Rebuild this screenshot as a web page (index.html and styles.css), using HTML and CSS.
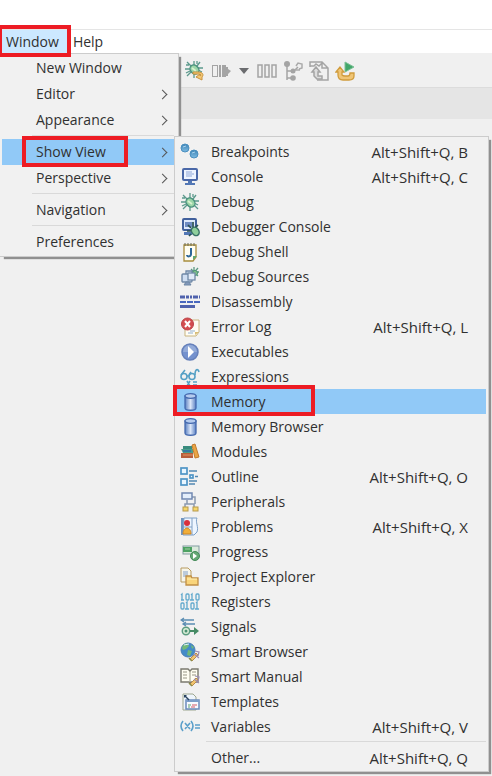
FILE: index.html
```html
<!DOCTYPE html>
<html lang="en">
<head>
<meta charset="utf-8">
<title>Window menu</title>
<link rel="stylesheet" href="styles.css">
</head>
<body>
<svg class="defs" aria-hidden="true">
  <defs>
    <linearGradient id="ball" x1="0" y1="0" x2="0" y2="1"><stop offset="0" stop-color="#3d83b5"/><stop offset="1" stop-color="#7fbce3"/></linearGradient>
    <linearGradient id="cyl" x1="0" x2="1"><stop offset="0" stop-color="#5a80c2"/><stop offset=".5" stop-color="#dbe6f8"/><stop offset="1" stop-color="#5a80c2"/></linearGradient>
    <g id="bug">
      <path d="M7 7 3 3M6 10H1M7 13 3 17M10 6V1M13 7 16 3M14 9H19M14 13 18 17M10 14V19M5 6H2M13 5V2M6 12 2 14M14 11 18 13" fill="none" stroke="#5b998c" stroke-width="1.300"/>
      <ellipse cx="10.500" cy="10.500" rx="4" ry="5" transform="rotate(-40 10.500 10.500)" fill="#9bd6a8" stroke="#4b917e" stroke-width="1.400"/>
      <path d="M8 9l4 3" stroke="#d8f2d0" stroke-width="1.600"/>
    </g>
    <g id="cylinder">
      <path d="M5 4v12c0 3 11 3 11 0V4z" fill="url(#cyl)" stroke="#4469ae" stroke-width="1.300"/>
      <ellipse cx="10.500" cy="4" rx="5.500" ry="2.300" fill="#b5cbee" stroke="#4469ae" stroke-width="1.300"/>
    </g>
    <g id="wand">
      <path d="M10 17l6-6 2 2-6 6z" fill="#f1c56e" stroke="#b98a4e"/>
      <path d="M15 9l4 1-1 4M14 12l5 4" fill="none" stroke="#9b8db2" stroke-width="1.200"/>
      <path d="M9 16l3 3" stroke="#8a8c4a" stroke-width="1.500"/>
    </g>
  </defs>
</svg>

<header class="titlebar"></header>

<nav class="menubar" role="menubar" aria-label="Main">
  <div class="menubar-entry">
    <button class="menubar-button active marked" type="button" aria-expanded="true">Window</button>
    <div class="menu main-menu" role="menu" aria-label="Window">
      <button class="item" role="menuitem" type="button">New Window</button>
      <button class="item more" role="menuitem" type="button">Editor</button>
      <button class="item more" role="menuitem" type="button">Appearance</button>
      <hr>
      <div class="parent">
        <button class="item more selected marked" role="menuitem" type="button" aria-expanded="true">Show View</button>
        <div class="menu submenu" role="menu" aria-label="Show View">
          <button class="item" role="menuitem" type="button"><svg viewBox="0 0 20 20"><circle cx="5" cy="6" r="4" fill="url(#ball)" stroke="#4a8fbf"/><circle cx="14" cy="12" r="4" fill="url(#ball)" stroke="#4a8fbf"/><path d="M3 5l3-1M12 11l3-1" stroke="#a9d3ee"/></svg><span>Breakpoints</span><kbd>Alt+Shift+Q, B</kbd></button>
          <button class="item" role="menuitem" type="button"><svg viewBox="0 0 20 20"><rect x="3" y="2" width="14" height="11" rx="1" fill="#eef4ff" stroke="#4a68a8" stroke-width="2"/><path d="M6 5h6M6 7h8M6 9h6" stroke="#8ea7d8"/><path d="M8 14h4v2h3v2H5v-2h3z" fill="#5277b5"/></svg><span>Console</span><kbd>Alt+Shift+Q, C</kbd></button>
          <button class="item" role="menuitem" type="button"><svg viewBox="0 0 20 20"><use href="#bug"/></svg><span>Debug</span></button>
          <button class="item" role="menuitem" type="button"><svg viewBox="0 0 20 20"><rect x="3" y="2" width="13" height="11" rx="1" fill="#dce8fb" stroke="#41609c" stroke-width="2"/><path d="M5 5h7v5H5z" fill="#6d8bc2"/><path d="M4 15h8v3H4z" fill="#5277b5"/><path d="M8 8l3 3M13 5v5M18 8l-3 3M7 14h4M11 17l-2 2" stroke="#2a4f50" stroke-width="1.700"/><ellipse cx="15" cy="14.500" rx="3.500" ry="4.500" transform="rotate(-35 15 14)" fill="#8fcf9c" stroke="#3a7267" stroke-width="1.500"/></svg><span>Debugger Console</span></button>
          <button class="item" role="menuitem" type="button"><svg viewBox="0 0 20 20"><path d="M4 3h12v12l-3 4H4z" fill="#fffef2" stroke="#a88d3d" stroke-width="1.300"/><path d="M5 1v3M8 1v3M11 1v3M14 1v3" stroke="#6d6a50"/><path d="M11 6v6c0 3-4 3-4 1" fill="none" stroke="#2d6699" stroke-width="2"/><path d="M13 18v-4h4z" fill="#5ea873"/></svg><span>Debug Shell</span></button>
          <button class="item" role="menuitem" type="button"><svg viewBox="0 0 20 20"><path d="M11 2l7 7M18 1l-7 8M14 0v9M11 5h8" stroke="#5b9983" stroke-width="1.300"/><circle cx="15" cy="6" r="2.500" fill="#86c888" stroke="#4c9075"/><path d="M6 8V4h6v8" fill="#dce8f5" stroke="#6f88a6" stroke-width="1.300"/><rect x="2" y="7" width="10" height="8" rx="1" fill="#cfdef2" stroke="#6f88a6" stroke-width="1.400"/><rect x="8" y="6" width="7" height="7" fill="#e1eaf7" stroke="#6f88a6" stroke-width="1.300"/><path d="M4 18h7l-2-3H6z" fill="#8298ba" stroke="#6f88a6"/></svg><span>Debug Sources</span></button>
          <button class="item" role="menuitem" type="button"><svg viewBox="0 0 20 20"><path d="M0 5h20" stroke="#4f62ad" stroke-width="3" stroke-dasharray="5 1 3 1 2 1"/><path d="M0 10h20" stroke="#4968bf" stroke-width="2" stroke-dasharray="6 1"/><path d="M0 14.500h15" stroke="#4f62ad" stroke-width="3"/></svg><span>Disassembly</span></button>
          <button class="item" role="menuitem" type="button"><svg viewBox="0 0 20 20"><path d="M8 3h11v12l-3 4H5V9z" fill="#fffdf4" stroke="#c9b47f"/><path d="M10 14h5M8 16h5" stroke="#92afd2"/><path d="M15 18v-3h4z" fill="#d9bd75"/><circle cx="7.500" cy="7" r="6" fill="#d34e50" stroke="#bd4247"/><path d="M5 4l5 6M10 4l-5 6" stroke="#fff" stroke-width="2"/></svg><span>Error Log</span><kbd>Alt+Shift+Q, L</kbd></button>
          <button class="item" role="menuitem" type="button"><svg viewBox="0 0 20 20"><circle cx="10" cy="10" r="8" fill="#7592ce" stroke="#6680ba" stroke-width="1.500"/><path d="M3 10a7 7 0 0 1 14 0z" fill="#93abd9"/><path d="M8 4l6 6-6 6z" fill="#fff"/></svg><span>Executables</span></button>
          <button class="item" role="menuitem" type="button"><svg viewBox="0 0 20 20"><g fill="none" stroke="#55a0c5" stroke-width="1.600"><circle cx="4" cy="9.500" r="3"/><circle cx="12" cy="9.500" r="3"/><path d="M1 8l4-5M9 8l2-3M7 9h2M15 8c0-6 3-7 4-3M7 14l3 5M10 14l-3 5M13 15h4M13 18h4"/></g></svg><span>Expressions</span></button>
          <button class="item selected marked" role="menuitem" type="button"><svg viewBox="0 0 20 20"><use href="#cylinder"/></svg><span>Memory</span></button>
          <button class="item" role="menuitem" type="button"><svg viewBox="0 0 20 20"><use href="#cylinder"/></svg><span>Memory Browser</span></button>
          <button class="item" role="menuitem" type="button"><svg viewBox="0 0 20 20"><path d="M3 4h9v3H3z" fill="#398b7d"/><path d="M1 7h12v4H3z" fill="#4a9d8a"/><path d="M3 8h8v2H3z" fill="#3679a3"/><path d="M1 11h12v5H1z" fill="#b75e3d"/><path d="M3 13h10" stroke="#e19563"/><path d="M12 3l3-1 4 13-4 1z" fill="#e9a545" stroke="#c37b2d"/></svg><span>Modules</span></button>
          <button class="item" role="menuitem" type="button"><svg viewBox="0 0 20 20"><g fill="#e9f6ff" stroke="#4f95c6" stroke-width="1.700"><rect x="1" y="1" width="6" height="6"/><rect x="1" y="12" width="6" height="6"/><rect x="10" y="8" width="3" height="3"/></g><path d="M9 4h8M15 9.500h3M9 14h8M9 17h6" stroke="#5288b2" stroke-width="1.500"/></svg><span>Outline</span><kbd>Alt+Shift+Q, O</kbd></button>
          <button class="item" role="menuitem" type="button"><svg viewBox="0 0 20 20"><path d="M7 8v4M5 15v-3h9v3M12 5h3v7" fill="none" stroke="#8a99b0" stroke-width="1.500"/><rect x="2" y="1" width="10" height="6" fill="#e4eefb" stroke="#7088b2" stroke-width="1.500"/><rect x="3" y="15" width="5" height="4" fill="#f5d66b" stroke="#b79a4c"/><rect x="13" y="15" width="5" height="4" fill="#f5d66b" stroke="#b79a4c"/></svg><span>Peripherals</span></button>
          <button class="item" role="menuitem" type="button"><svg viewBox="0 0 20 20"><path d="M1 1h4v17H1z" fill="#7094be"/><path d="M4 1h13c-2 4 2 9 0 14l-3 3H3z" fill="#edf5ff" stroke="#7ca0c7"/><path d="M12 1v17M3 10h9" stroke="#81a1c4"/><circle cx="7" cy="6" r="3" fill="#d9303c"/><path d="M3 17c0-8 8-8 8 0z" fill="#f1ae38" stroke="#cb8527"/></svg><span>Problems</span><kbd>Alt+Shift+Q, X</kbd></button>
          <button class="item" role="menuitem" type="button"><svg viewBox="0 0 20 20"><rect x="3" y="4" width="16" height="8" fill="#dbeadc" stroke="#829ba1"/><path d="M3 5h9v5H3z" fill="#4da263"/><path d="M5 7h5" stroke="#a4d0a5"/><circle cx="15" cy="14" r="4.500" fill="#65a875" stroke="#438a57"/><path d="M13 11l4 3-4 3z" fill="#fff"/></svg><span>Progress</span></button>
          <button class="item" role="menuitem" type="button"><svg viewBox="0 0 20 20"><path d="M1 1h7l3 3v11H1z" fill="#f6f5eb" stroke="#b79b60"/><path d="M3 5h5M3 7h5M3 9h5" stroke="#819fc9"/><path d="M6 9h5l1 2h6v7H6z" fill="#f9d47a" stroke="#c08e45" stroke-width="1.300"/><path d="M7 12h10" stroke="#fff1b9"/></svg><span>Project Explorer</span></button>
          <button class="item" role="menuitem" type="button"><svg viewBox="0 0 20 20"><g fill="none" stroke="#61a9cd" stroke-width="1.300"><path d="M1 3l1-1v6M1 8h3M11 3l1-1v6M10 8h4M6 11l1-1v7M5 17h4M16 11l1-1v7M15 17h4"/><rect x="6" y="2" width="3" height="6" rx="1"/><rect x="16" y="2" width="3" height="6" rx="1"/><rect x="1" y="11" width="3" height="6" rx="1"/><rect x="11" y="11" width="3" height="6" rx="1"/></g></svg><span>Registers</span></button>
          <button class="item" role="menuitem" type="button"><svg viewBox="0 0 20 20"><path d="M2 3h12M3 7h12M4 1L1 3l3 2M6 5L3 7l3 2" fill="none" stroke="#5a8db3" stroke-width="1.300"/><circle cx="6" cy="14" r="3.700" fill="#dcefd9" stroke="#5b9c80" stroke-width="1.500"/><circle cx="6" cy="14" r="1.500" fill="#4b9173"/><path d="M10 13h4v-3l5 4-5 4v-3h-4z" fill="#468b65"/></svg><span>Signals</span></button>
          <button class="item" role="menuitem" type="button"><svg viewBox="0 0 20 20"><circle cx="8" cy="8" r="7" fill="#438bc8" stroke="#4a80b4"/><path d="M3 3l4-2 2 3-3 3-3 1-1-2zM8 8l4 1-2 5-3-1zM11 3l3 2-2 2z" fill="#72b978"/><path d="M4 3l5-1" stroke="#dcefff"/><use href="#wand"/></svg><span>Smart Browser</span></button>
          <button class="item" role="menuitem" type="button"><svg viewBox="0 0 20 20"><path d="M1 2h7l2 2 2-2h6v13h-7l-1 1-1-1H1z" fill="#fffef2" stroke="#7b7a6f" stroke-width="1.400"/><path d="M10 4v11M3 5h4M3 8h4M3 11h4M12 5h4M12 8h4" stroke="#999786"/><use href="#wand"/></svg><span>Smart Manual</span></button>
          <button class="item" role="menuitem" type="button"><svg viewBox="0 0 20 20"><path d="M3 2h10l3 3v13H3z" fill="#eef5fc" stroke="#9ea790"/><rect x="6" y="8" width="13" height="9" fill="#f8faff" stroke="#6b8bba" stroke-width="1.500"/><path d="M6 9h13" stroke="#7c9ec9" stroke-width="2"/><path d="M8 13h3M8 15h2" stroke="#5ba371"/><path d="M12 13h5M11 15h4" stroke="#d45a66"/><path d="M5 4l4 4" stroke="#28425e" stroke-width="1.500"/><path d="M4 3h3L4 6z" fill="#28425e"/></svg><span>Templates</span></button>
          <button class="item" role="menuitem" type="button"><svg viewBox="0 0 20 20"><path d="M3 4q-4 5 0 10M11 4q4 5 0 10M5 6l5 6M10 6l-5 6M15 8h5M15 11h5" fill="none" stroke="#5b9fca" stroke-width="1.600"/></svg><span>Variables</span><kbd>Alt+Shift+Q, V</kbd></button>
          <hr>
          <button class="item" role="menuitem" type="button"><span>Other...</span><kbd>Alt+Shift+Q, Q</kbd></button>
        </div>
      </div>
      <button class="item more" role="menuitem" type="button">Perspective</button>
      <hr>
      <button class="item more" role="menuitem" type="button">Navigation</button>
      <hr>
      <button class="item" role="menuitem" type="button">Preferences</button>
    </div>
  </div>
  <button class="menubar-button" type="button">Help</button>
</nav>

<main class="workbench">
  <div class="toolbar" role="toolbar" aria-label="Debug">
    <button type="button" aria-label="Debug"><svg viewBox="0 0 20 20"><g transform="translate(-1 -2)"><use href="#bug"/></g><path d="M8 11h5c5 0 6 3 4 5v3l-6-3 4-3v2c2-1 0-2-2-2H8z" fill="#f5c873" stroke="#c8923f"/></svg></button>
    <button type="button" aria-label="Resume"><svg viewBox="0 0 20 20" fill="#a4a4a4"><path d="M1 4h6v12H1zM2 5v10h4V5z" fill-rule="evenodd"/><path d="M8 4h2v12H8zM11 4h4v2h2v2l3 2-3 3v2h-2v1h-4z"/></svg></button>
    <button class="drop" type="button" aria-label="Resume options"><svg viewBox="0 0 10 6"><path d="M0 0h10L5 6z" fill="#6b6c6f"/></svg></button>
    <button type="button" aria-label="Columns"><svg viewBox="0 0 20 20" fill="none" stroke="#a4a4a4" stroke-width="1.500"><path d="M1 4h4v12H1zM8 4h4v12H8zM15 4h4v12h-4z"/></svg></button>
    <button type="button" aria-label="Tree"><svg viewBox="0 0 20 20"><circle cx="4" cy="3" r="3" fill="#a4a4a4"/><path d="M4 4v15M4 10h5M4 17h5M12 9l3-3" fill="none" stroke="#a4a4a4" stroke-width="1.500"/><circle cx="10" cy="10" r="2.500" fill="#a4a4a4"/><circle cx="10" cy="17" r="2.800" fill="#a4a4a4"/><path d="M13 5l2-3 4 1v4l-3 1M12 9h5" fill="none" stroke="#aaa" stroke-width="1.500"/></svg></button>
    <button type="button" aria-label="Restart file"><svg viewBox="0 0 20 20" fill="none" stroke="#a4a4a4" stroke-width="1.500"><path d="M1 6V1h12l6 6v12H8M1 5h4l2-2 3 2 3-3M13 2v5h6"/><path d="M3 11l4-5 4 5H9v4h4v3H8l-3-3v-4z" fill="#ddd"/></svg></button>
    <button type="button" aria-label="Run again"><svg viewBox="0 0 20 20"><path d="M10 1l9 5-9 5z" fill="#42a76a" stroke="#7cc095"/><path d="M1 11l4-5 4 5H7v3q1 1 3 1h3q2 0 2-3h4v3q0 4-5 4H8q-5 0-5-5v-3z" fill="#f0c575" stroke="#d09c3c" stroke-width="1.300"/></svg></button>
  </div>
  <div class="tabstrip"></div>
</main>
</body>
</html>
```

FILE: styles.css
```css
* { box-sizing: border-box; }

body {
  margin: 0;
  min-height: 100vh;
  display: flex;
  flex-direction: column;
  background: #fff;
  color: #303030;
  font: 14px/20px "Open Sans", "Noto Sans", sans-serif;
}

button {
  margin: 0;
  padding: 0;
  border: 0;
  background: none;
  color: inherit;
  font: inherit;
  text-align: left;
}

svg { display: block; width: 20px; height: 20px; }

.defs { position: absolute; width: 0; height: 0; }

.titlebar { height: 30px; border-bottom: 1px solid #e5e5e5; }

.menubar { display: flex; height: 23px; padding-left: 2px; }

.menubar-entry { position: relative; }

.menubar-button {
  position: relative;
  height: 23px;
  padding: 0 6px;
}

.menubar-button.active { padding: 0 8px 0 4px; background: #cce8ff; }

.marked::after {
  content: "";
  position: absolute;
  z-index: 3;
  border: 4px solid #ed1c24;
  pointer-events: none;
}

.menubar-button.marked::after { inset: -5px -4px -4px; }

.menu {
  position: absolute;
  z-index: 1;
  background: #f1f1f1;
  border: 1px solid #ccc;
  box-shadow: 3px 3px 1px -1px #909090;
}

.main-menu {
  top: 23px;
  left: -2px;
  min-width: 179px;
  padding: 1px 4px 1px 2px;
  border-left: 0;
}

.parent { position: relative; }

.item {
  position: relative;
  display: flex;
  align-items: center;
  width: 100%;
  height: 26px;
  padding-left: 34px;
  white-space: nowrap;
}

.item.selected { background: #91c9f7; }

.more::before {
  content: "";
  position: absolute;
  right: 8px;
  width: 6px;
  height: 6px;
  border: solid #555;
  border-width: 1px 1px 0 0;
  transform: rotate(45deg);
}

.main-menu > .parent > .marked::after { inset: -3px 46px -2px 20px; }

hr {
  height: 6px;
  margin: 0 0 0 30px;
  border: solid transparent;
  border-width: 2px 0 3px;
  background: #d9d9d9 padding-box;
}

.submenu {
  top: -3px;
  left: 172px;
  z-index: 2;
  min-width: 315px;
  padding: 2px 2px 1px 1px;
}

.submenu .item {
  height: 25px;
  padding: 0 18px 0 4px;
}

.submenu .item span { margin-left: 11px; }

.submenu .item span:first-child { margin-left: 31px; }

.submenu kbd { margin-left: auto; font: inherit; font-size: 15px; }

.submenu .marked::after { inset: -4px 171px -2px -3px; }

.workbench { flex: 1; background: #f0f0f0; }

.toolbar {
  display: flex;
  align-items: center;
  gap: 6px;
  height: 34px;
  padding: 2px 0 0 185px;
}

.drop { margin: 0 2px; }

.drop svg { width: 10px; height: 6px; }

.tabstrip { height: 32px; background: #e5e5e5; border-top: 1px solid #dcdcdc; }
```
